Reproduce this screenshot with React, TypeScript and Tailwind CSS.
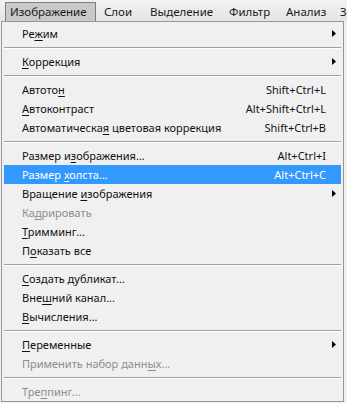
import React from "react";

type Item =
  | { type: "sep" }
  | {
      type: "item";
      pre: string;
      u: string;
      post: string;
      shortcut?: string;
      sub?: boolean;
      disabled?: boolean;
      active?: boolean;
    };

const items: Item[] = [
  { type: "item", pre: "Ре", u: "ж", post: "им", sub: true },
  { type: "sep" },
  { type: "item", pre: "", u: "К", post: "оррекция", sub: true },
  { type: "sep" },
  { type: "item", pre: "Автото", u: "н", post: "", shortcut: "Shift+Ctrl+L" },
  { type: "item", pre: "", u: "А", post: "втоконтраст", shortcut: "Alt+Shift+Ctrl+L" },
  { type: "item", pre: "Автоматическа", u: "я", post: " цветовая коррекция", shortcut: "Shift+Ctrl+B" },
  { type: "sep" },
  { type: "item", pre: "Размер и", u: "з", post: "ображения...", shortcut: "Alt+Ctrl+I" },
  { type: "item", pre: "Размер ", u: "х", post: "олста...", shortcut: "Alt+Ctrl+C", active: true },
  { type: "item", pre: "Вращение ", u: "и", post: "зображения", sub: true },
  { type: "item", pre: "Ка", u: "д", post: "рировать", disabled: true },
  { type: "item", pre: "", u: "Т", post: "римминг..." },
  { type: "item", pre: "П", u: "о", post: "казать все" },
  { type: "sep" },
  { type: "item", pre: "", u: "С", post: "оздать дубликат..." },
  { type: "item", pre: "Вне", u: "ш", post: "ний канал..." },
  { type: "item", pre: "", u: "В", post: "ычисления..." },
  { type: "sep" },
  { type: "item", pre: "", u: "П", post: "еременные", sub: true },
  { type: "item", pre: "Применить набор данн", u: "ы", post: "х...", disabled: true },
  { type: "sep" },
  { type: "item", pre: "Тре", u: "п", post: "пинг...", disabled: true },
];

function Arrow() {
  return (
    <svg width="4" height="7" viewBox="0 0 4 7" className="block">
      <path d="M0 0 L4 3.5 L0 7 Z" fill="#000" />
    </svg>
  );
}

export default function App() {
  return (
    <div
      className="w-[347px] h-[403px] bg-[#f0f0f0] overflow-hidden text-[11px] leading-none"
      style={{ fontFamily: '"Noto Sans", "Open Sans", sans-serif' }}
    >
      {/* Menu bar */}
      <div className="h-[21px] flex items-end bg-gradient-to-b from-[#f2f2f2] to-[#e4e4e4] text-[#1a1a1a] whitespace-nowrap text-[11.5px]">
        <div className="ml-[5px] w-[91px] h-[19px] flex items-center pl-[4px] bg-[#c9c9c9] border border-b-0 border-[#7f7f7f]">
          Изображение
        </div>
        <div className="w-[54px] h-[19px] flex items-center pl-[8px]">Слои</div>
        <div className="w-[79px] h-[19px] flex items-center">Выделение</div>
        <div className="w-[57px] h-[19px] flex items-center">Фильтр</div>
        <div className="w-[54px] h-[19px] flex items-center">Анализ</div>
        <div className="h-[19px] flex items-center">З</div>
      </div>

      {/* Dropdown */}
      <div className="ml-[1px] w-[343px] border border-[#979797] bg-[#f0f0f0] pt-[2px] text-black">
        {items.map((it, i) =>
          it.type === "sep" ? (
            <div key={i} className="h-[9px] flex flex-col justify-center px-[2px]">
              <div className="h-[1px] bg-[#a0a0a0]" />
              <div className="h-[1px] bg-white" />
            </div>
          ) : (
            <div
              key={i}
              className={
                "h-[19px] mx-[2px] flex items-center pl-[18px] pr-[5px] whitespace-nowrap " +
                (it.active ? "bg-[#3399ff] text-white" : it.disabled ? "text-[#8d8d8d]" : "text-[#111]")
              }
            >
              <span className="flex-1">
                {it.pre}
                <span className="underline underline-offset-[2px]">{it.u}</span>
                {it.post}
              </span>
              {it.shortcut && <span className="pr-[10px]">{it.shortcut}</span>}
              {it.sub && (
                <span className="w-[4px] flex items-center">
                  <Arrow />
                </span>
              )}
            </div>
          )
        )}
      </div>
    </div>
  );
}
